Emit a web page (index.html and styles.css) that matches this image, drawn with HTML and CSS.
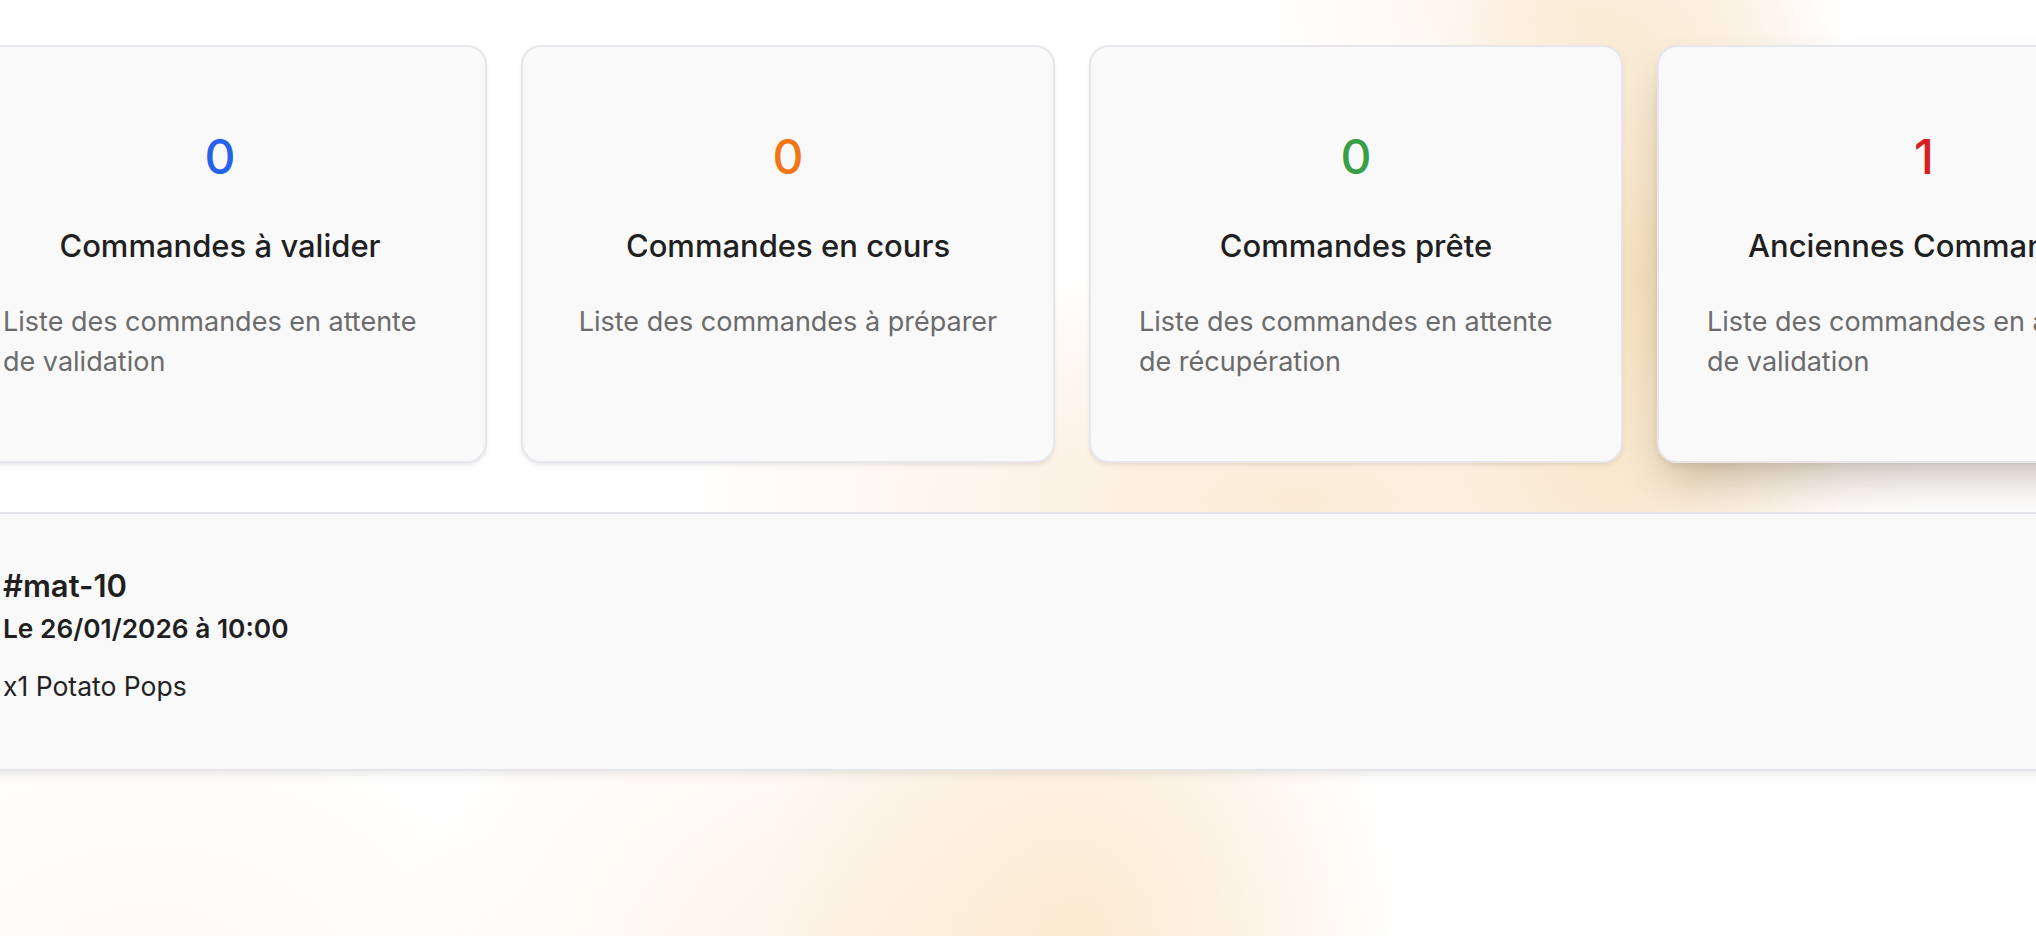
FILE: index.html
```html
<!DOCTYPE html>
<html lang="fr">
<head>
<meta charset="utf-8">
<title>Commandes</title>
<link rel="stylesheet" href="styles.css">
</head>
<body>
<main class="page">
  <section class="stats">
    <article class="stat-card">
      <div class="stat-count count-blue">0</div>
      <h2 class="stat-title">Commandes à valider</h2>
      <p class="stat-desc">Liste des commandes en attente de validation</p>
    </article>
    <article class="stat-card">
      <div class="stat-count count-orange">0</div>
      <h2 class="stat-title">Commandes en cours</h2>
      <p class="stat-desc">Liste des commandes à préparer</p>
    </article>
    <article class="stat-card">
      <div class="stat-count count-green">0</div>
      <h2 class="stat-title">Commandes prête</h2>
      <p class="stat-desc">Liste des commandes en attente de récupération</p>
    </article>
    <article class="stat-card stat-card-active">
      <div class="stat-count count-red">1</div>
      <h2 class="stat-title">Anciennes Commandes</h2>
      <p class="stat-desc">Liste des commandes en attente de validation</p>
    </article>
  </section>
  <section class="orders">
    <article class="order">
      <h3 class="order-id">#mat-10</h3>
      <div class="order-date">Le 26/01/2026 à 10:00</div>
      <ul class="order-items">
        <li class="order-item">x1 Potato Pops</li>
      </ul>
    </article>
  </section>
</main>
</body>
</html>
```

FILE: styles.css
```css
* { box-sizing: border-box; }

html, body {
  margin: 0;
  padding: 0;
  width: 2036px;
  height: 936px;
  overflow: hidden;
}

body {
  font-family: Inter, "Noto Sans", "Liberation Sans", sans-serif;
  color: #222222;
  background-color: #ffffff;
  background-image:
    radial-gradient(ellipse 230px 460px at 1640px 280px, rgba(246, 220, 182, 0.9), rgba(246, 220, 182, 0) 100%),
    radial-gradient(ellipse 300px 140px at 1560px 10px, rgba(250, 232, 206, 0.55), rgba(250, 232, 206, 0) 100%),
    radial-gradient(ellipse 620px 240px at 1300px 500px, rgba(249, 228, 198, 0.75), rgba(249, 228, 198, 0) 100%),
    radial-gradient(ellipse 320px 420px at 1080px 940px, rgba(251, 230, 200, 0.75), rgba(251, 230, 200, 0) 100%),
    radial-gradient(ellipse 520px 420px at 900px 1000px, rgba(252, 236, 214, 0.7), rgba(252, 236, 214, 0) 100%),
    radial-gradient(ellipse 400px 300px at 150px 1000px, rgba(253, 244, 232, 0.6), rgba(253, 244, 232, 0) 100%);
}

.page {
  margin-left: -47px;
  width: 2238px;
  padding-top: 45px;
  display: flex;
  flex-direction: column;
  gap: 49px;
}

.stats {
  display: grid;
  grid-template-columns: repeat(4, 534px);
  gap: 34px;
}

.stat-card {
  height: 418px;
  background: #f9f9f9;
  border: 2px solid #e6e6ec;
  border-radius: 20px;
  padding: 86px 48px 48px;
  display: flex;
  flex-direction: column;
  align-items: center;
  box-shadow: 0 3px 6px -1px rgba(0, 0, 0, 0.08), 0 2px 4px -2px rgba(0, 0, 0, 0.06);
}

.stat-card-active {
  box-shadow: 0 24px 44px -10px rgba(70, 45, 10, 0.3), 0 4px 8px -2px rgba(0, 0, 0, 0.08);
}

.stat-count {
  font-size: 48px;
  line-height: 48px;
  font-weight: 500;
}

.count-blue { color: #2563eb; }
.count-orange { color: #f27516; }
.count-green { color: #37a046; }
.count-red { color: #d91f1f; }

.stat-title {
  margin: 45px 0 0;
  font-size: 31px;
  line-height: 40px;
  font-weight: 500;
  color: #1f1f1f;
  white-space: nowrap;
}

.stat-desc {
  margin: 36px 0 0;
  font-size: 27px;
  line-height: 40px;
  color: #6b6b6b;
  text-align: left;
}

.orders {
  display: flex;
  flex-direction: column;
}

.order {
  height: 259px;
  background: #f9f9f9;
  border-top: 2px solid #e4e4ea;
  border-bottom: 2px solid #e4e4ea;
  padding: 54px 50px 0;
  box-shadow: 0 6px 10px -3px rgba(0, 0, 0, 0.09);
}

.order-id {
  margin: 0;
  font-size: 31px;
  line-height: 36px;
  font-weight: 600;
  color: #1f1f1f;
}

.order-date {
  margin-top: 9px;
  font-size: 26.3px;
  line-height: 32px;
  font-weight: 600;
  color: #1f1f1f;
}

.order-items {
  list-style: none;
  margin: 25px 0 0;
  padding: 0;
}

.order-item {
  font-size: 26.5px;
  line-height: 32px;
  color: #222222;
}
```
